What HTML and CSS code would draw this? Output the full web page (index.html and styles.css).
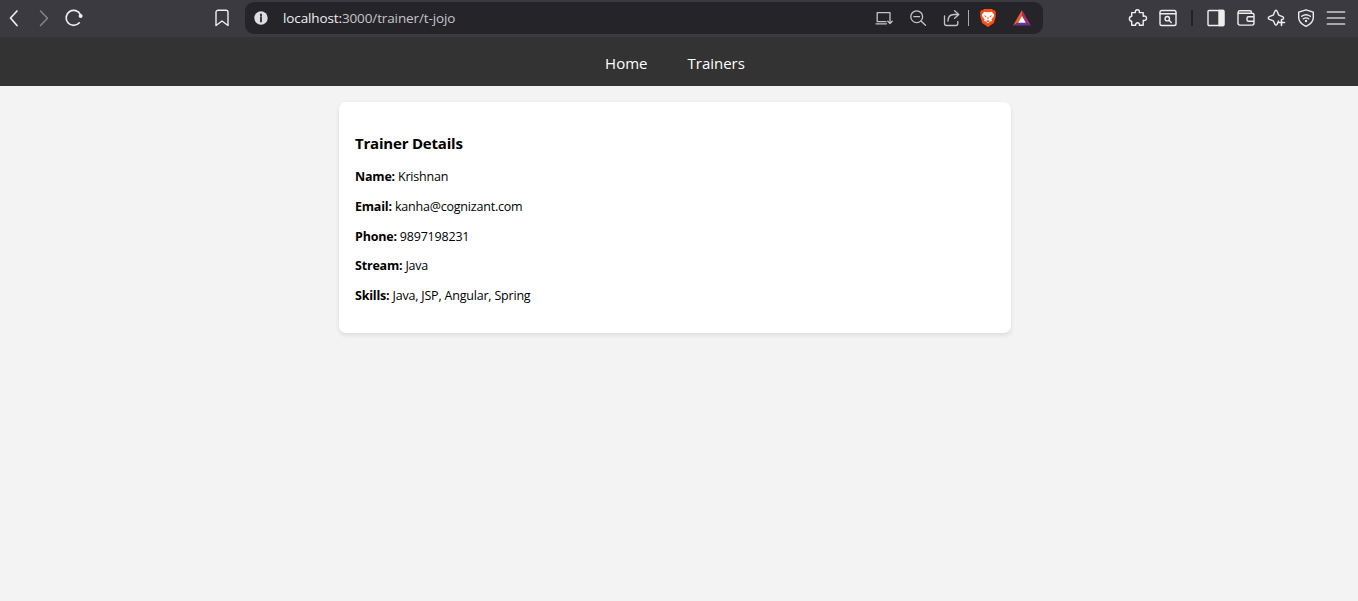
FILE: index.html
```html
<!DOCTYPE html>
<html lang="en">
<head>
<meta charset="utf-8">
<title>Trainer Details</title>
<link rel="stylesheet" href="styles.css">
</head>
<body>
<header class="toolbar">
  <div class="history">
    <svg class="icon" viewBox="0 0 20 20"><path d="M13 3 6.5 10l6.500 7.500" stroke-width="1.700"/></svg>
    <svg class="icon dim" viewBox="0 0 20 20"><path d="M6.500 3 13.500 10.200 6.500 17.500" stroke-width="1.500"/></svg>
    <svg class="icon" viewBox="0 0 20 20"><path d="M15.300 14.800A7.500 7.500 0 1 1 16.500 6.800" stroke-width="1.700"/><circle cx="16.600" cy="8" r="2" fill="#eee" stroke="none"/></svg>
  </div>
  <svg class="icon bookmark" viewBox="0 0 20 20"><path d="M6 2.300h8a2 2 0 0 1 2 2v13.200l-6-4.500-6 4.500V4.300a2 2 0 0 1 2-2Z"/></svg>
  <div class="address">
    <svg class="icon" viewBox="0 0 20 20"><circle cx="10" cy="10" r="6.700" fill="#dedee2" stroke="none"/><path d="M10 9.300v4.200M10 6.300v1.500" stroke="#29282e" stroke-width="1.800"/></svg>
    <span class="url"><span class="host">localhost:</span>3000/trainer/t-jojo</span>
    <div class="page-actions">
      <svg class="icon soft" viewBox="0 0 20 20"><path d="M16 10V4.700H3.200v9H12M2 15.800h10.500M16 8.500v7M13.800 13.300l2.200 2.300 2.200-2.300"/></svg>
      <svg class="icon soft" viewBox="0 0 20 20"><circle cx="8.700" cy="8.700" r="5.900"/><path d="M13 13l4.500 4.300M5.900 8.700h5.600"/></svg>
      <svg class="icon soft" viewBox="0 0 20 20"><path d="M2.500 8v7.500a2 2 0 0 0 2 2h9.300a2 2 0 0 0 2-2V13.500M6 13.200C6 8.500 8.500 6.500 12 6.500h4.500M12.600 2.800l4.200 3.700-4.200 3.800"/></svg>
    </div>
    <span class="address-divider"></span>
    <div class="badges">
      <svg class="icon" viewBox="0 0 20 20"><path d="M6 1h8l1.400 1.500 1.400-.2 1.200 2.500-.5 1.200.4 1.800-2 7.200L10 19l-5.900-4-2-7.200.4-1.800L2 4.800l1.200-2.500 1.400.2Z" fill="#fb4f16" stroke="none"/><path d="m6.300 3.700 2.200.6h3l2.200-.6 2.400 2.800-.5 2.200-2.200 2.600.6 1.800-2 .5-2 2-2-2-2-.5.600-1.800-2.200-2.600-.5-2.200Z" fill="#fff" stroke="none"/><path d="m5.800 7.200 2.800.7-.7 1.500ZM14.200 7.200l-2.800.7.700 1.500ZM9 9.500l1 2 1-2ZM8 13l2-1 2 1-2 1.300Z" fill="#fb4f16" stroke="none"/></svg>
      <svg class="icon" viewBox="0 0 20 20"><path d="M10 2v7L6.500 14.500 1 17.500Z" fill="#f15a2c" stroke="none"/><path d="M10 2v7l3.500 5.500 5.500 3Z" fill="#a32c6f" stroke="none"/><path d="m1 17.500 5.500-3h7l5.500 3Z" fill="#65349b" stroke="none"/><path d="m10 8 3.800 6.700H6.200Z" fill="#fff" stroke="none"/></svg>
    </div>
  </div>
  <div class="tools">
    <svg class="icon" viewBox="0 0 20 20"><path d="M3.700 4.600H7.500c-.6-1.800.5-2.900 1.900-2.900s2.500 1.100 1.900 2.900h3.900v3.700c1.900-.7 3.300.4 3.300 2s-1.400 2.700-3.300 2v4.900h-3.800c.3-1.500-.6-2.400-1.800-2.400s-2.200.9-1.900 2.400H3.700v-4c-1.500-.1-2.300-1.200-2.300-2.500s.8-2.300 2.300-2.400Z"/></svg>
    <svg class="icon" viewBox="0 0 20 20"><rect x="2" y="2.500" width="16" height="15" rx="1.800"/><path d="M2 5.700h16"/><circle cx="9.300" cy="10.700" r="2.200"/><path d="m11 12.300 2.200 2.200"/></svg>
    <span class="tools-divider"></span>
    <svg class="icon" viewBox="0 0 20 20"><rect x="2" y="2.500" width="16" height="15" rx="1"/><path d="M13 2.500h4.500v15H13Z" fill="#eee"/></svg>
    <svg class="icon" viewBox="0 0 20 20"><path d="M15.500 5V4.500a1.700 1.700 0 0 0-1.700-1.700H4A2 2 0 0 0 2 4.500v10.600a2 2 0 0 0 2 2h12a2 2 0 0 0 2-2V7.300a2 2 0 0 0-2-2H4a1.500 1.500 0 0 1-1.800-1.200M18 8.800h-5.500a1.500 1.500 0 0 0-1.500 1.500v1.500a1.500 1.500 0 0 0 1.500 1.500H18"/></svg>
    <svg class="icon" viewBox="0 0 20 20"><path d="M12.500 13.100 11.200 16c-.6 1.500-1.800 1.500-2.400 0l-1.500-3.200-3.900-1.500c-1.500-.7-1.500-2 0-2.700l3.900-1.500 1.500-3.700c.6-1.500 1.800-1.500 2.400 0l1.500 3.700 3.800 1.500c1.500.6 1.500 2 0 2.700"/><path d="M15.500 11.500v6M12.500 14.500h6" stroke-width="1.600"/></svg>
    <svg class="icon" viewBox="0 0 20 20"><path d="m10 1.800 7.300 2.400v5.300c0 4-3 6.900-7.300 8.900-4.300-2-7.300-4.900-7.300-8.900V4.200Z"/><path d="M5.700 8.300c2.700-2 5.900-2 8.600 0M7.300 10.800c1.700-1.200 3.700-1.200 5.400 0"/><circle cx="10" cy="13" r="1.200" fill="#eee" stroke="none"/></svg>
    <svg class="icon" viewBox="0 0 20 20"><path d="M1.500 4h17M1.500 10h17M1.500 16h17" stroke="#ccc" stroke-width="1.700"/></svg>
  </div>
</header>
<nav class="site-nav">
  <a class="nav-link home">Home</a>
  <a class="nav-link trainers">Trainers</a>
</nav>
<main class="card">
  <h3 class="title">Trainer Details</h3>
  <p class="field"><strong>Name:</strong> Krishnan</p>
  <p class="field"><strong>Email:</strong> kanha@cognizant.com</p>
  <p class="field"><strong>Phone:</strong> 9897198231</p>
  <p class="field"><strong>Stream:</strong> Java</p>
  <p class="field"><strong>Skills:</strong> Java, JSP, Angular, Spring</p>
</main>
</body>
</html>
```
FILE: styles.css
```css
* { box-sizing: border-box; }
body {
  margin: 0;
  min-height: 601px;
  background: #f3f3f3;
  color: #000;
  font-family: "Segoe UI", "Open Sans", "Noto Sans", sans-serif;
}
.toolbar {
  display: flex;
  align-items: center;
  height: 38px;
  padding: 0 12px 2px 4px;
  background: #3b3a40;
  border-bottom: 1px solid #343338;
}
.icon {
  display: block;
  flex: none;
  width: 20px;
  height: 20px;
  fill: none;
  stroke: #eee;
  stroke-width: 1.4;
  stroke-linecap: round;
  stroke-linejoin: round;
}
.dim { stroke: #858489; }
.soft { stroke: #c4c4c8; stroke-width: 1.3; }
.history { display: flex; gap: 10px; }
.bookmark { margin-left: 128px; }
.address {
  display: flex;
  align-items: center;
  width: 798px;
  height: 32px;
  margin-left: 13px;
  padding: 0 11px 0 6px;
  border-radius: 9px;
  background: #252429;
}
.url {
  margin-left: 12px;
  font-size: 13.5px;
  letter-spacing: -0.12px;
  line-height: 20px;
  color: #c5c4c9;
  white-space: nowrap;
}
.host { color: #efeff2; }
.page-actions { display: flex; gap: 14px; margin-left: auto; }
.address-divider { width: 1px; height: 16px; margin: 0 9px 0 6px; background: #aaa9ad; }
.badges { display: flex; gap: 14px; }
.tools { display: flex; align-items: center; gap: 10px; margin-left: auto; }
.tools-divider { width: 2px; height: 16px; margin: 0 3px; background: #222126; }
.site-nav {
  display: flex;
  justify-content: center;
  gap: 40px;
  height: 48px;
  padding: 14px 8px 0 0;
  background: #333;
}
.nav-link { color: #fff; font-size: 15px; line-height: 23px; white-space: nowrap; }
.card {
  width: 672px;
  height: 231px;
  margin: 16px 0 0 339px;
  padding: 31px 16px 0;
  border-radius: 7px;
  background: #fff;
  box-shadow: 0 2px 4px rgba(0, 0, 0, 0.1);
}
.title { margin: 0 0 14px; font-size: 15px; line-height: 21px; letter-spacing: -0.2px; }
.field { margin: 0 0 11.800px; font-size: 12.500px; line-height: 18px; letter-spacing: -0.2px; }
```
